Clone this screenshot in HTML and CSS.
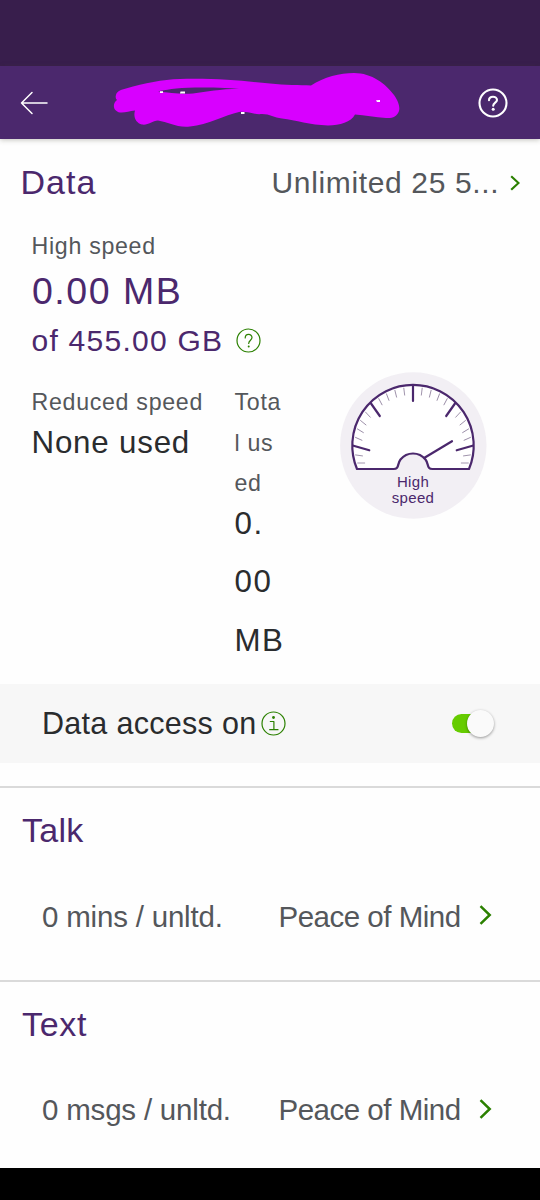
FILE: index.html
```html
<!DOCTYPE html>
<html lang="en">
<head>
<meta charset="utf-8">
<title>Usage</title>
<link rel="stylesheet" href="styles.css">
</head>
<body>
<div class="status-bar"></div>
<header class="app-bar">
  <svg class="back" width="28" height="24" viewBox="0 0 28 24"><path d="M12 1.5 1.5 12 12 22.5M1.5 12H27"/></svg>
  <svg class="scribble" width="290" height="73" viewBox="110 66 290 73">
    <path class="ink" fill-rule="evenodd" d="M116 95C117 91 121 89.500 126 88.500C145 83 162 79.500 180 79C215 78 245 81 270 83.500C285 85 300 85 311 85.500C324 77 340 73 354 73C372 73 386 84 394 95C399 102 400 108 399 111C397 117 392 118.500 386 118C375 117.500 365 115 355 114.500C351 122 340 125.500 328 125.500C310 125 296 120 282 118.500C274 117.500 270 114 262 114C254 115 248 111 239 112C225 115 208 125 190 126.500C177 128 168 122 158 120.500C152 121 148 125.500 142 124.500C136 123 133 117 135 110.500C129 111 125 113 120 112.500C113 111 112 104 117 100Q115 98 116 95ZM158 91.300C165 90 175 88 195 87.500C213 87.500 228 88 239 88.800C220 89 207 92 193 93.500C181 94.500 170 93 158 91.300Z"/>
    <path class="speck" d="M160 91.300H163V93H160ZM180.500 91.500H185V93.500H180ZM241 112H244.500V114H241ZM376 100.300 380 100V102H377Z"/>
  </svg>
  <svg class="help" width="30" height="30" viewBox="0 0 30 30"><circle cx="15" cy="15" r="13.500"/><path d="M11 12.200C11 7.500 19 7.600 19 12C19 14.600 15.200 14.800 15.200 17.700"/><circle class="dot" cx="15.200" cy="21.200" r="1.500"/></svg>
</header>
<main>
  <section class="data">
    <div class="data-head">
      <h2>Data</h2>
      <span class="plan">Unlimited 25 5...</span>
      <svg class="chev small" width="10" height="16" viewBox="0 0 10 16"><path d="M1.200 1.200 8.500 8 1.200 14.800"/></svg>
    </div>
    <div class="high">
      <div class="label">High speed</div>
      <div class="amount">0.00 MB</div>
      <div class="quota"><span>of 455.00 GB</span>
        <svg class="round" width="25" height="25" viewBox="0 0 25 25"><circle cx="12.500" cy="12.500" r="11.500"/><path d="M9.200 10C9.200 5.200 16 5.300 16 9.600C16 12.200 12.700 12.300 12.700 15.500"/><circle class="dot" cx="12.700" cy="18.500" r="1"/></svg>
      </div>
    </div>
    <div class="usage">
      <div class="reduced">
        <div class="label">Reduced speed</div>
        <div class="value">None used</div>
      </div>
      <div class="total">
        <div class="label">Tota<br>l us<br>ed</div>
        <div class="value">0.<br>00<br>MB</div>
      </div>
      <div class="gauge">
        <svg width="147" height="147" viewBox="0 0 147 147">
          <circle class="disc" cx="73.300" cy="73.500" r="73.200"/>
          <path class="dial" d="M17 97A60.700 60.700 0 1 1 129 97H92.500C86.500 97 89 92 85.500 87.500C79 79.500 67 79.500 60.500 87.500C57 92 59.500 97 53.500 97Z"/>
          <g class="minor">
            <path transform="rotate(7 73 91)" d="M73 15.600v7"/><path transform="rotate(14 73 91)" d="M73 16.100v7"/><path transform="rotate(21 73 91)" d="M73 16.900v7"/><path transform="rotate(28 73 91)" d="M73 18.100v7"/><path transform="rotate(43 73 91)" d="M73 21.400v7"/><path transform="rotate(51 73 91)" d="M73 23.500v7"/><path transform="rotate(58.500 73 91)" d="M73 25.800v7"/><path transform="rotate(66 73 91)" d="M73 28.100v7"/><path transform="rotate(82 73 91)" d="M73 33v7"/><path transform="rotate(90 73 91)" d="M73 35.700v7"/>
            <path transform="rotate(-7 73 91)" d="M73 15.600v7"/><path transform="rotate(-14 73 91)" d="M73 16.100v7"/><path transform="rotate(-21 73 91)" d="M73 16.900v7"/><path transform="rotate(-28 73 91)" d="M73 18.100v7"/><path transform="rotate(-43 73 91)" d="M73 21.400v7"/><path transform="rotate(-51 73 91)" d="M73 23.500v7"/><path transform="rotate(-58.500 73 91)" d="M73 25.800v7"/><path transform="rotate(-66 73 91)" d="M73 28.100v7"/><path transform="rotate(-82 73 91)" d="M73 33v7"/><path transform="rotate(-90 73 91)" d="M73 35.700v7"/>
          </g>
          <path class="major" d="M73 13V29M31 31.500 39.800 44M115 31.500 106.200 44M13.500 73.700 29.300 78.300M132.500 73.700 116.700 78.300M84.500 85.700 112 69.200"/>
          <text x="73" y="115.300">High</text>
          <text x="73" y="131">speed</text>
        </svg>
      </div>
    </div>
    <div class="access">
      <span>Data access on</span>
      <svg class="round" width="25" height="25" viewBox="0 0 25 25"><circle cx="12.500" cy="12.500" r="11.500"/><path d="M9.300 10.500H12.900V18.700M8.700 18.700H17"/><circle class="dot" cx="12.500" cy="6.500" r="1.400"/></svg>
      <div class="switch"><div class="knob"></div></div>
    </div>
  </section>
  <section class="bucket talk">
    <h2>Talk</h2>
    <div class="row"><span class="used">0 mins / unltd.</span><span class="name">Peace of Mind</span>
      <svg class="chev" width="13" height="20" viewBox="0 0 13 20"><path d="M1.500 1.200 10.700 10 1.500 18.800"/></svg></div>
  </section>
  <section class="bucket text">
    <h2>Text</h2>
    <div class="row"><span class="used">0 msgs / unltd.</span><span class="name">Peace of Mind</span>
      <svg class="chev" width="13" height="20" viewBox="0 0 13 20"><path d="M1.500 1.200 10.700 10 1.500 18.800"/></svg></div>
  </section>
</main>
<footer class="nav-bar"></footer>
</body>
</html>
```
FILE: styles.css
```css
* { box-sizing: border-box; }
body {
  margin: 0;
  width: 540px;
  height: 1200px;
  display: flex;
  flex-direction: column;
  overflow: hidden;
  background: #fefefe;
  color: #54575b;
  font-family: "Liberation Sans", Arial, sans-serif;
  white-space: nowrap;
}
svg { display: block; flex: none; fill: none; stroke-linecap: round; stroke-linejoin: round; }
.status-bar { flex: none; height: 66px; background: #381e4c; }
.app-bar {
  flex: none;
  height: 73px;
  display: flex;
  align-items: center;
  padding-left: 20px;
  background: #4b286d;
  box-shadow: 0 1px 5px rgba(60, 60, 40, .3);
}
.back { stroke: #fff; stroke-width: 1.5; }
.scribble { margin-left: 62px; }
.ink { fill: #d800ff; }
.speck { fill: #fff; }
.help { margin-left: 77.5px; stroke: #fff; stroke-width: 2.1; }
.help .dot { fill: #fff; stroke: none; }
main { height: 1029px; flex: none; }

h2 {
  margin: 0;
  height: 85px;
  line-height: 85px;
  padding-left: 22px;
  font-size: 34px;
  font-weight: 400;
  color: #4b286d;
}
.data { height: 647px; display: flex; flex-direction: column; }
.data-head { display: flex; align-items: center; height: 87px; }
.data-head h2 { width: 271.5px; padding-left: 20.5px; letter-spacing: 1px; }
.plan { width: 238px; font-size: 30px; letter-spacing: .65px; }
.chev { stroke: #2b8000; stroke-width: 2.2; stroke-linecap: butt; stroke-linejoin: miter; }
.high { padding: 6px 0 0 31.5px; color: #4b286d; }
.label { font-size: 23.2px; line-height: 40.5px; letter-spacing: .7px; color: #54575b; }
.high .label { line-height: 29px; }
.amount { padding-left: .5px; font-size: 37.5px; line-height: 60px; letter-spacing: 1.5px; }
.quota { display: flex; align-items: center; gap: 13px; font-size: 30px; line-height: 39px; letter-spacing: 1.25px; }
.round { stroke: #2b8000; stroke-width: 1.2; }
.round .dot { fill: #2b8000; stroke: none; }
.usage { display: flex; height: 302px; padding: 22px 0 0 31.5px; }
.reduced { width: 203px; }
.value { font-size: 31.3px; letter-spacing: .8px; color: #2a2c2e; line-height: 40px; }
.total { width: 105.5px; }
.total .value { margin-top: -9px; line-height: 58.5px; letter-spacing: 1.5px; }
.gauge { margin-top: -10px; }
.disc { fill: #f2eff4; }
.dial { fill: #fff; stroke: #4b286d; stroke-width: 2.2; }
.major { stroke: #4b286d; stroke-width: 2.2; }
.minor { stroke: #8e7f9c; stroke-width: .8; }
.gauge text { fill: #4b286d; font-size: 15px; text-anchor: middle; letter-spacing: .3px; }
.access {
  display: flex;
  align-items: center;
  height: 79px;
  margin-top: 22px;
  padding-left: 42px;
  background: #f7f7f7;
  color: #2a2c2e;
  font-size: 30.5px;
  letter-spacing: .3px;
}
.access span { width: 218.5px; }
.switch {
  display: flex;
  align-items: center;
  justify-content: flex-end;
  width: 42px;
  height: 19px;
  margin-left: 166.5px;
  border-radius: 10px;
  background: linear-gradient(90deg, #66cc00 70%, transparent 70%);
}
.knob { width: 27px; height: 27px; flex: none; border-radius: 50%; background: #fafafa; box-shadow: 0 1px 3px rgba(0, 0, 0, .4); }
.bucket { height: 193.5px; border-top: 2px solid #dadada; }
.talk h2 { letter-spacing: .3px; }
.text h2 { letter-spacing: .7px; }
.row { display: flex; align-items: center; height: 87px; padding-left: 42px; font-size: 29.5px; }
.used { width: 236.5px; letter-spacing: -.2px; }
.name { width: 200px; letter-spacing: -.5px; }
.row .chev { margin-top: -3px; stroke-width: 2.5; }
.nav-bar { flex: none; height: 32px; background: #000; position: relative; }
```
